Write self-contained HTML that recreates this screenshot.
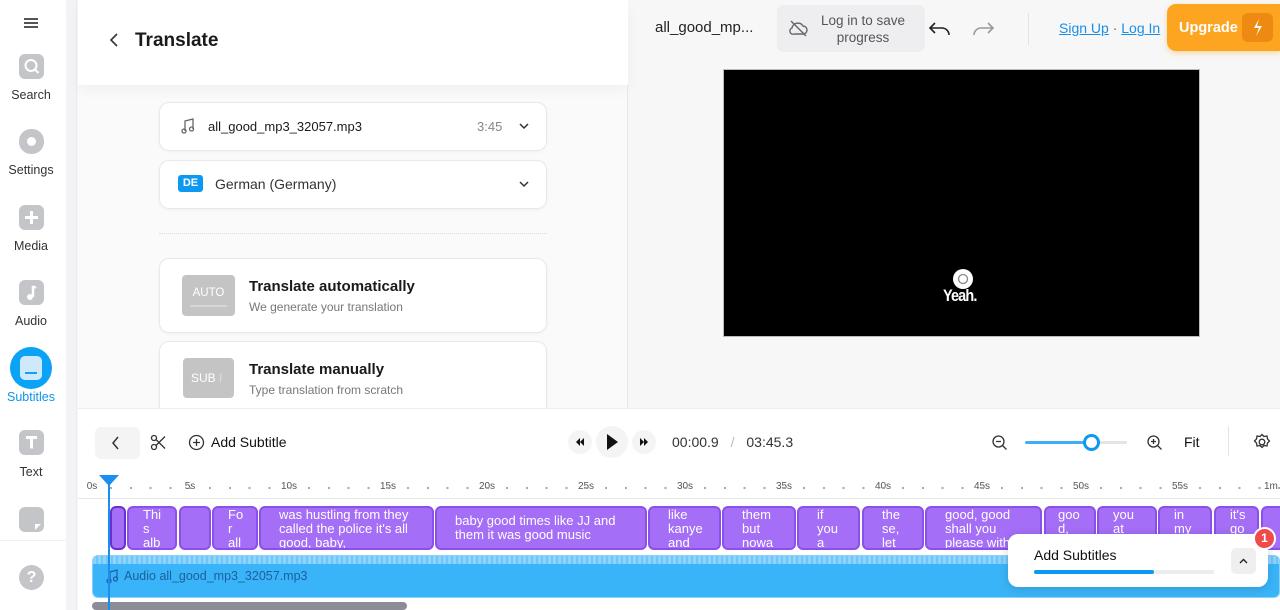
<!DOCTYPE html>
<html><head><meta charset="utf-8"><style>
*{box-sizing:border-box;margin:0;padding:0}
body{width:1280px;height:610px;overflow:hidden;font-family:"Liberation Sans",sans-serif;background:#f7f7f7;position:relative;color:#1a1a1a}
.a{position:absolute}
.sb{left:0;top:0;width:66px;height:610px;background:#fff}
.sbs{left:66px;top:0;width:11px;height:610px;background:#f3f3f5;border-right:1px solid #ececec}
.ic{width:25px;height:25px;border-radius:6px;background:#c4c5c9;left:19px}
.lb{width:62px;left:0;text-align:center;font-size:12.5px;color:#333}
.lp{left:78px;top:0;width:550px;height:408px;background:#fafafa;border-right:1px solid #e8e8e8}
.hd{left:78px;top:0;width:550px;height:85px;background:#fff;box-shadow:0 6px 12px rgba(0,0,0,.04)}
.card{left:159px;width:388px;background:#fff;border:1px solid #e9e9eb;border-radius:10px;box-shadow:0 1px 3px rgba(0,0,0,.04)}
.blk{top:506px;height:44px;background:#a46ef6;border:2px solid #8b50ec;border-radius:6px;color:#fff;font-size:13px;line-height:14px;padding:0 4px 0 18px;overflow:hidden;white-space:nowrap}
.rl{top:481px;font-size:10px;color:#555;width:30px;text-align:center}
</style></head><body>
<div class="a sb"></div><div class="a sbs"></div>
<div class="a" style="left:24px;top:18px;width:14px;height:2px;background:#555;box-shadow:0 4px 0 #555,0 8px 0 #555"></div>
<div class="a ic" style="top:54px"><svg width="25" height="25"><circle cx="12" cy="11.5" r="5.5" fill="none" stroke="#fff" stroke-width="2"/><path d="M16 15.5l3.5 3.5" stroke="#fff" stroke-width="2"/></svg></div>
<div class="a lb" style="top:88px">Search</div>
<div class="a ic" style="top:129px;border-radius:12px"><svg width="25" height="25"><circle cx="12.5" cy="12.5" r="4.5" fill="#fff"/></svg></div>
<div class="a lb" style="top:163px">Settings</div>
<div class="a ic" style="top:205px"><svg width="25" height="25"><path d="M12.5 6v13M6 12.5h13" stroke="#fff" stroke-width="3"/></svg></div>
<div class="a lb" style="top:239px">Media</div>
<div class="a ic" style="top:280px"><svg width="25" height="25"><path d="M14 6v11" stroke="#fff" stroke-width="2.5"/><circle cx="11" cy="17" r="3" fill="#fff"/><path d="M14 6l3 2" stroke="#fff" stroke-width="2"/></svg></div>
<div class="a lb" style="top:314px">Audio</div>
<div class="a" style="left:10px;top:347px;width:42px;height:42px;border-radius:50%;background:#0aa3f5"><div class="a" style="left:10px;top:9px;width:22px;height:24px;border-radius:5px;background:#cfe9fb"></div><div class="a" style="left:15px;top:25px;width:12px;height:2px;background:#0aa3f5"></div></div>
<div class="a lb" style="top:390px;color:#0a96e8">Subtitles</div>
<div class="a ic" style="top:430px"><svg width="25" height="25"><path d="M7 7.5h11M12.5 7.5v11" stroke="#fff" stroke-width="3"/></svg></div>
<div class="a lb" style="top:465px">Text</div>
<div class="a ic" style="top:507px"><svg width="25" height="25"><path d="M16 23l6-6h-6z" fill="#fff"/></svg></div>
<div class="a" style="left:0;top:540px;width:66px;height:70px;background:#fff;border-top:1px solid #f0f0f0"></div>
<div class="a" style="left:19px;top:565px;width:25px;height:25px;border-radius:50%;background:#c4c5c9;color:#fff;font-weight:bold;font-size:16px;text-align:center;line-height:25px">?</div>
<div class="a lp"></div>
<div class="a hd"></div>
<svg class="a" style="left:106px;top:32px" width="16" height="16"><path d="M11 2L5 8l6 6" fill="none" stroke="#333" stroke-width="1.6"/></svg>
<div class="a" style="left:135px;top:30px;font-size:19px;font-weight:bold;color:#1a1a1a">Translate</div>
<div class="a card" style="top:102px;height:49px"></div>
<svg class="a" style="left:181px;top:118px" width="14" height="16"><path d="M4 13V3l8-2v10" fill="none" stroke="#666" stroke-width="1.3"/><circle cx="3" cy="13" r="2" fill="none" stroke="#666" stroke-width="1.3"/><circle cx="10.5" cy="11" r="2" fill="none" stroke="#666" stroke-width="1.3"/></svg>
<div class="a" style="left:208px;top:119px;font-size:13px">all_good_mp3_32057.mp3</div>
<div class="a" style="left:477px;top:119px;font-size:13px;color:#888">3:45</div>
<svg class="a" style="left:519px;top:122px" width="10" height="8"><path d="M1 2l4 4 4-4" fill="none" stroke="#333" stroke-width="1.5"/></svg>
<div class="a card" style="top:160px;height:49px"></div>
<div class="a" style="left:178px;top:175px;width:25px;height:17px;background:#0d99f2;border-radius:3px;color:#fff;font-size:11px;font-weight:bold;text-align:center;line-height:17px">DE</div>
<div class="a" style="left:215px;top:176px;font-size:14px;color:#333">German (Germany)</div>
<svg class="a" style="left:519px;top:180px" width="10" height="8"><path d="M1 2l4 4 4-4" fill="none" stroke="#333" stroke-width="1.5"/></svg>
<div class="a" style="left:159px;top:233px;width:388px;border-top:1px dotted #ddd"></div>
<div class="a card" style="top:258px;height:75px"></div>
<div class="a" style="left:182px;top:275px;width:53px;height:41px;background:#c4c4c4;border-radius:4px;color:#fff;font-size:11.5px;text-align:center;line-height:36px">AUTO<div class="a" style="left:8px;top:30px;width:37px;height:2px;background:#d6d6d6"></div></div>
<div class="a" style="left:249px;top:278px;font-size:15px;font-weight:bold">Translate automatically</div>
<div class="a" style="left:249px;top:300px;font-size:12px;color:#777">We generate your translation</div>
<div class="a card" style="top:341px;height:80px;border-bottom:none"></div>
<div class="a" style="left:183px;top:358px;width:51px;height:40px;background:#c4c4c4;border-radius:4px;color:#fff;font-size:12px;line-height:40px;padding-left:8px">SUB<span style="color:#ddd"> I</span></div>
<div class="a" style="left:249px;top:361px;font-size:15px;font-weight:bold">Translate manually</div>
<div class="a" style="left:249px;top:383px;font-size:12px;color:#777">Type translation from scratch</div>
<div class="a" style="left:655px;top:19px;font-size:15px;color:#222">all_good_mp...</div>
<div class="a" style="left:777px;top:5px;width:148px;height:47px;background:#eeeef0;border-radius:7px;font-size:13.5px;color:#555;text-align:center;line-height:17px;padding:7px 0 0 24px">Log in to save<br>progress</div>
<svg class="a" style="left:788px;top:19px" width="20" height="18"><path d="M6 15h9a4 4 0 0 0 0-8 6 6 0 0 0-11 2 3 3 0 0 0 2 6" fill="none" stroke="#666" stroke-width="1.4"/><path d="M3 2l15 15" stroke="#666" stroke-width="1.4"/></svg>
<svg class="a" style="left:928px;top:20px" width="24" height="18"><path d="M7 3L2 8l5 5M2 8h12a7 7 0 0 1 7 7" fill="none" stroke="#222" stroke-width="1.6"/></svg>
<svg class="a" style="left:971px;top:20px" width="24" height="18"><path d="M17 3l5 5-5 5M22 8H10a7 7 0 0 0-7 7" fill="none" stroke="#999" stroke-width="1.6"/></svg>
<div class="a" style="left:1028px;top:13px;width:1px;height:32px;background:#e3e3e3"></div>
<div class="a" style="left:1059px;top:20px;font-size:14px;color:#1a8fe8"><u>Sign Up</u> <span style="color:#666">·</span> <u>Log In</u></div>
<div class="a" style="left:1167px;top:4px;width:113px;height:47px;background:#fda521;border-radius:9px 0 0 9px;box-shadow:0 2px 6px rgba(253,165,33,.4)"></div>
<div class="a" style="left:1179px;top:20px;font-size:14.5px;font-weight:bold;color:#fff">Upgrade</div>
<div class="a" style="left:1242px;top:13px;width:31px;height:29px;background:#ee8a12;border-radius:6px"><svg width="31" height="29"><path d="M17 6l-5 9h5l-3 8 6-10h-5z" fill="#fff"/></svg></div>
<div class="a" style="left:723px;top:69px;width:477px;height:268px;background:#000;border:1px solid #bbb"></div>
<div class="a" style="left:953px;top:269px;width:20px;height:20px;border-radius:50%;background:#fff"><svg width="20" height="20"><circle cx="10" cy="10" r="4.5" fill="none" stroke="#888" stroke-width="1.3"/></svg></div>
<div class="a" style="left:943px;top:286px;font-size:17px;font-weight:bold;color:#fff;letter-spacing:-1px;transform:scaleX(.85);transform-origin:left">Yeah.</div>
<div class="a" style="left:78px;top:408px;width:1202px;height:202px;background:#fff;border-top:1px solid #eee"></div>
<div class="a" style="left:95px;top:427px;width:45px;height:32px;background:#f4f4f5;border-radius:6px"><svg width="45" height="32"><path d="M23 10l-5 6 5 6" fill="none" stroke="#333" stroke-width="1.5"/></svg></div>
<svg class="a" style="left:150px;top:434px" width="17" height="17"><circle cx="4" cy="4" r="2.5" fill="none" stroke="#333" stroke-width="1.3"/><circle cx="4" cy="13" r="2.5" fill="none" stroke="#333" stroke-width="1.3"/><path d="M6 5.5l9 9M6 11.5l9-9" stroke="#333" stroke-width="1.3"/></svg>
<svg class="a" style="left:188px;top:434px" width="17" height="17"><circle cx="8.5" cy="8.5" r="7" fill="none" stroke="#333" stroke-width="1.3"/><path d="M8.5 5v7M5 8.5h7" stroke="#333" stroke-width="1.3"/></svg>
<div class="a" style="left:211px;top:434px;font-size:14px;color:#111">Add Subtitle</div>
<div class="a" style="left:568px;top:430px;width:24px;height:24px;border-radius:50%;background:#f4f4f5"><svg width="24" height="24"><path d="M12 8l-4 4 4 4zM16 8l-4 4 4 4z" fill="#111"/></svg></div>
<div class="a" style="left:596px;top:426px;width:32px;height:32px;border-radius:50%;background:#f4f4f5"><svg width="32" height="32"><path d="M11 8l11 8-11 8z" fill="#111"/></svg></div>
<div class="a" style="left:632px;top:430px;width:24px;height:24px;border-radius:50%;background:#f4f4f5"><svg width="24" height="24"><path d="M8 8l4 4-4 4zM12 8l4 4-4 4z" fill="#111"/></svg></div>
<div class="a" style="left:672px;top:434px;font-size:14px;color:#333">00:00.9 <span style="color:#bbb;margin:0 8px">/</span> 03:45.3</div>
<svg class="a" style="left:991px;top:434px" width="17" height="17"><circle cx="7.5" cy="7.5" r="5.5" fill="none" stroke="#333" stroke-width="1.3"/><path d="M5 7.5h5M11.5 11.5l4 4" stroke="#333" stroke-width="1.3"/></svg>
<div class="a" style="left:1025px;top:441px;width:102px;height:3px;background:#e4e4e4;border-radius:2px"></div>
<div class="a" style="left:1025px;top:441px;width:66px;height:3px;background:#3eaef7;border-radius:2px"></div>
<div class="a" style="left:1083px;top:434px;width:17px;height:17px;border-radius:50%;background:#fff;border:3px solid #0d99f2"></div>
<svg class="a" style="left:1146px;top:434px" width="17" height="17"><circle cx="7.5" cy="7.5" r="5.5" fill="none" stroke="#333" stroke-width="1.3"/><path d="M5 7.5h5M7.5 5v5M11.5 11.5l4 4" stroke="#333" stroke-width="1.3"/></svg>
<div class="a" style="left:1184px;top:434px;font-size:14px;color:#111">Fit</div>
<div class="a" style="left:1228px;top:426px;width:1px;height:30px;background:#e3e3e3"></div>
<svg class="a" style="left:1253px;top:433px" width="18" height="18"><circle cx="9" cy="9" r="2.8" fill="none" stroke="#333" stroke-width="1.3"/><path d="M9 1.5l2 2 3-.5.5 3 2 2-2 2-.5 3-3-.5-2 2-2-2-3 .5-.5-3-2-2 2-2 .5-3 3 .5z" fill="none" stroke="#333" stroke-width="1.3"/></svg>
<div class="a" style="left:78px;top:498px;width:1202px;height:1px;background:#e8e8e8"></div>
<div class="a rl" style="left:77px">0s</div><div class="a rl" style="left:175px">5s</div><div class="a rl" style="left:274px">10s</div><div class="a rl" style="left:373px">15s</div><div class="a rl" style="left:472px">20s</div><div class="a rl" style="left:571px">25s</div><div class="a rl" style="left:670px">30s</div><div class="a rl" style="left:769px">35s</div><div class="a rl" style="left:868px">40s</div><div class="a rl" style="left:967px">45s</div><div class="a rl" style="left:1066px">50s</div><div class="a rl" style="left:1165px">55s</div><div class="a rl" style="left:1264px;text-align:left">1m</div>
<div class="a" style="left:110px;top:487px;width:1170px;height:2px;background:repeating-linear-gradient(90deg,#aaa 0 2px,transparent 2px 19.8px)"></div>
<div class="a blk" style="left:110px;width:16px;border-color:#6a2fd0;padding:0"></div>
<div class="a blk" style="left:127px;width:50px;padding-left:14px">Thi<br>s<br>alb</div>
<div class="a blk" style="left:179px;width:32px"></div>
<div class="a blk" style="left:212px;width:46px;padding-left:14px">Fo<br>r<br>all</div>
<div class="a blk" style="left:259px;width:175px">was hustling from they<br>called the police it's all<br>good, baby,</div>
<div class="a blk" style="left:435px;width:212px;padding-top:6px">baby good times like JJ and<br>them it was good music</div>
<div class="a blk" style="left:648px;width:73px">like<br>kanye<br>and</div>
<div class="a blk" style="left:722px;width:74px">them<br>but<br>nowa</div>
<div class="a blk" style="left:797px;width:63px">if<br>you<br>a</div>
<div class="a blk" style="left:862px;width:62px">the<br>se,<br>let</div>
<div class="a blk" style="left:925px;width:117px">good, good<br>shall you<br>please with</div>
<div class="a blk" style="left:1044px;width:52px;padding-left:12px">goo<br>d,</div>
<div class="a blk" style="left:1097px;width:60px;padding-left:14px">you<br>at</div>
<div class="a blk" style="left:1158px;width:54px;padding-left:14px">in<br>my</div>
<div class="a blk" style="left:1214px;width:45px;padding-left:14px">it's<br>go</div>
<div class="a blk" style="left:1261px;width:30px"></div>
<div class="a" style="left:92px;top:555px;width:1188px;height:43px;background:#3ab4f8;border:1px solid #8ad0fb;border-radius:6px;overflow:hidden"><div style="height:8px;background:repeating-linear-gradient(90deg,#8ed3fb 0 3px,#6cc6fa 3px 5px)"></div></div>
<svg class="a" style="left:106px;top:569px" width="13" height="15"><path d="M4 12V3l7-2v9" fill="none" stroke="#1d5f9a" stroke-width="1.2"/><circle cx="3" cy="12" r="2" fill="none" stroke="#1d5f9a" stroke-width="1.2"/><circle cx="9.5" cy="10" r="2" fill="none" stroke="#1d5f9a" stroke-width="1.2"/></svg>
<div class="a" style="left:124px;top:569px;font-size:12.5px;color:#1d5f9a">Audio all_good_mp3_32057.mp3</div>
<div class="a" style="left:92px;top:602px;width:315px;height:8px;background:#8c8c96;border-radius:4px"></div>
<div class="a" style="left:108px;top:482px;width:2px;height:128px;background:#1a8ff0"></div>
<div class="a" style="left:99px;top:475px;width:0;height:0;border-left:10px solid transparent;border-right:10px solid transparent;border-top:11px solid #1a8ff0"></div>
<div class="a" style="left:1008px;top:534px;width:260px;height:53px;background:#fff;border-radius:10px;box-shadow:0 2px 10px rgba(0,0,0,.15)"></div>
<div class="a" style="left:1034px;top:547px;font-size:14px;color:#111">Add Subtitles</div>
<div class="a" style="left:1034px;top:570px;width:180px;height:4px;background:#ececec;border-radius:2px"><div style="width:120px;height:4px;background:#0d99f2;border-radius:2px"></div></div>
<div class="a" style="left:1231px;top:548px;width:25px;height:26px;background:#efeff0;border-radius:5px"><svg width="25" height="26"><path d="M9 15l3.5-3.5L16 15" fill="none" stroke="#222" stroke-width="1.4"/></svg></div>
<div class="a" style="left:1253px;top:527px;width:23px;height:23px;border-radius:50%;background:#f04a4a;border:2px solid #fff;color:#fff;font-size:12px;font-weight:bold;text-align:center;line-height:19px">1</div>
</body></html>
